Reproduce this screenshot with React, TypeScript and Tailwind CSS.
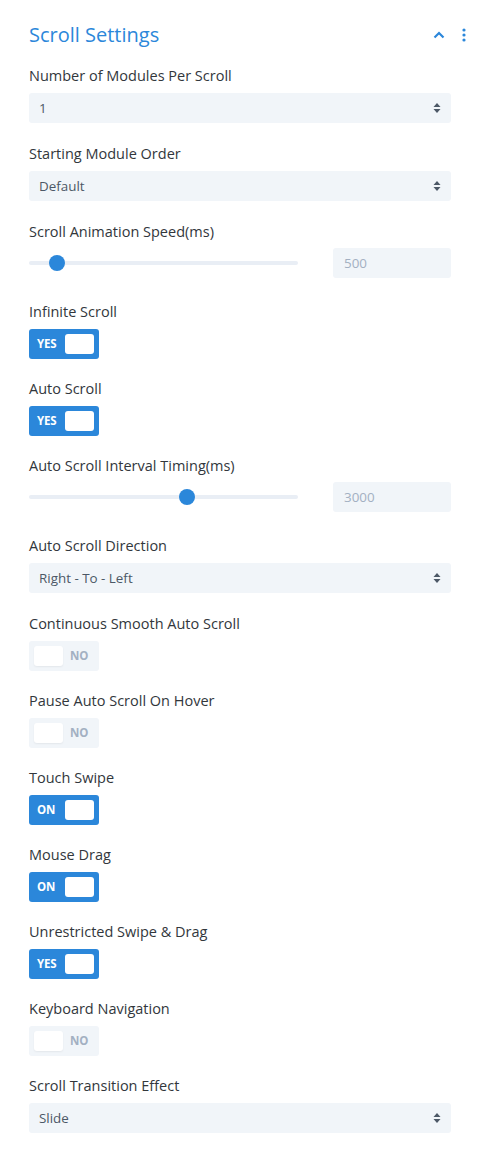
import React from "react";

// Settings rows, top to bottom
type Row =
  | { kind: "select"; label: string; value: string }
  | { kind: "range"; label: string; value: string; pos: number }
  | { kind: "toggle"; label: string; on: boolean; text: string };

const rows: Row[] = [
  { kind: "select", label: "Number of Modules Per Scroll", value: "1" },
  { kind: "select", label: "Starting Module Order", value: "Default" },
  { kind: "range", label: "Scroll Animation Speed(ms)", value: "500", pos: 28 },
  { kind: "toggle", label: "Infinite Scroll", on: true, text: "YES" },
  { kind: "toggle", label: "Auto Scroll", on: true, text: "YES" },
  { kind: "range", label: "Auto Scroll Interval Timing(ms)", value: "3000", pos: 158 },
  { kind: "select", label: "Auto Scroll Direction", value: "Right - To - Left" },
  { kind: "toggle", label: "Continuous Smooth Auto Scroll", on: false, text: "NO" },
  { kind: "toggle", label: "Pause Auto Scroll On Hover", on: false, text: "NO" },
  { kind: "toggle", label: "Touch Swipe", on: true, text: "ON" },
  { kind: "toggle", label: "Mouse Drag", on: true, text: "ON" },
  { kind: "toggle", label: "Unrestricted Swipe & Drag", on: true, text: "YES" },
  { kind: "toggle", label: "Keyboard Navigation", on: false, text: "NO" },
  { kind: "select", label: "Scroll Transition Effect", value: "Slide" },
];

function SelectBox({ value }: { value: string }) {
  return (
    <div className="h-[30px] rounded-[3px] bg-[#f1f5f9] flex items-center justify-between pl-[10px] pr-[10px] text-[13.4px] text-[#4c5866]">
      <span>{value}</span>
      <svg width="8" height="12" viewBox="0 0 8 12">
        <path d="M4 1 L7.5 5 H0.5 Z" fill="#4c5866" />
        <path d="M4 11 L7.5 7 H0.5 Z" fill="#4c5866" />
      </svg>
    </div>
  );
}

function RangeBox({ value, pos }: { value: string; pos: number }) {
  return (
    <div className="flex items-center justify-between mb-[3px]">
      <div className="relative w-[269px] h-[4px] rounded-full bg-[#e9eef5]">
        <div
          className="absolute top-1/2 w-[16px] h-[16px] -mt-[8px] -ml-[8px] rounded-full bg-[#2b87da]"
          style={{ left: pos }}
        />
      </div>
      <div className="w-[118px] h-[30px] rounded-[3px] bg-[#f1f5f9] flex items-center pl-[11px] text-[13.4px] text-[#a3b0c2]">
        {value}
      </div>
    </div>
  );
}

function Toggle({ on, text }: { on: boolean; text: string }) {
  if (on) {
    return (
      <div className="w-[70px] h-[30px] -mb-[1px] rounded-[3px] bg-[#2b87da] flex items-center justify-between pl-[8px] pr-[5px]">
        <span className="text-[11.5px] font-bold text-white tracking-[-0.2px]">{text}</span>
        <div className="w-[29px] h-[20px] rounded-[3px] bg-white" />
      </div>
    );
  }
  return (
    <div className="w-[70px] h-[30px] -mb-[1px] rounded-[3px] bg-[#f1f5f9] flex items-center pl-[5px] gap-[7px]">
      <div className="w-[29px] h-[20px] rounded-[3px] bg-white shadow-[0_1px_2px_rgba(0,0,0,0.06)]" />
      <span className="text-[11.5px] font-bold text-[#a3b0c2]">{text}</span>
    </div>
  );
}

export default function App() {
  return (
    <div
      className="w-[480px] min-h-[1161px] bg-white px-[29px] pt-[21px]"
      style={{ fontFamily: '"Open Sans", "Noto Sans", sans-serif' }}
    >
      <div className="flex items-center justify-between h-[28px] mb-[17px] -mr-[15px]">
        <h2 className="text-[20px] font-medium text-[#2b87da] leading-[28px]">Scroll Settings</h2>
        <div className="flex items-center gap-[17px]">
          <svg width="12" height="8" viewBox="0 0 12 8">
            <path d="M1.5 6.5 L6 2 L10.5 6.5" fill="none" stroke="#2b87da" strokeWidth="2.2" />
          </svg>
          <svg width="4" height="14" viewBox="0 0 4 14">
            <circle cx="2" cy="2" r="1.6" fill="#2b87da" />
            <circle cx="2" cy="7" r="1.6" fill="#2b87da" />
            <circle cx="2" cy="12" r="1.6" fill="#2b87da" />
          </svg>
        </div>
      </div>

      <div className="flex flex-col gap-[21px]">
        {rows.map((row, i) => (
          <div key={i}>
            <div
              className={`text-[14.5px] leading-[20px] text-[#32373c] ${row.kind === "range" ? "mb-[6px]" : "mb-[7px]"}`}
            >
              {row.label}
            </div>
            {row.kind === "select" && <SelectBox value={row.value} />}
            {row.kind === "range" && <RangeBox value={row.value} pos={row.pos} />}
            {row.kind === "toggle" && <Toggle on={row.on} text={row.text} />}
          </div>
        ))}
      </div>
    </div>
  );
}
